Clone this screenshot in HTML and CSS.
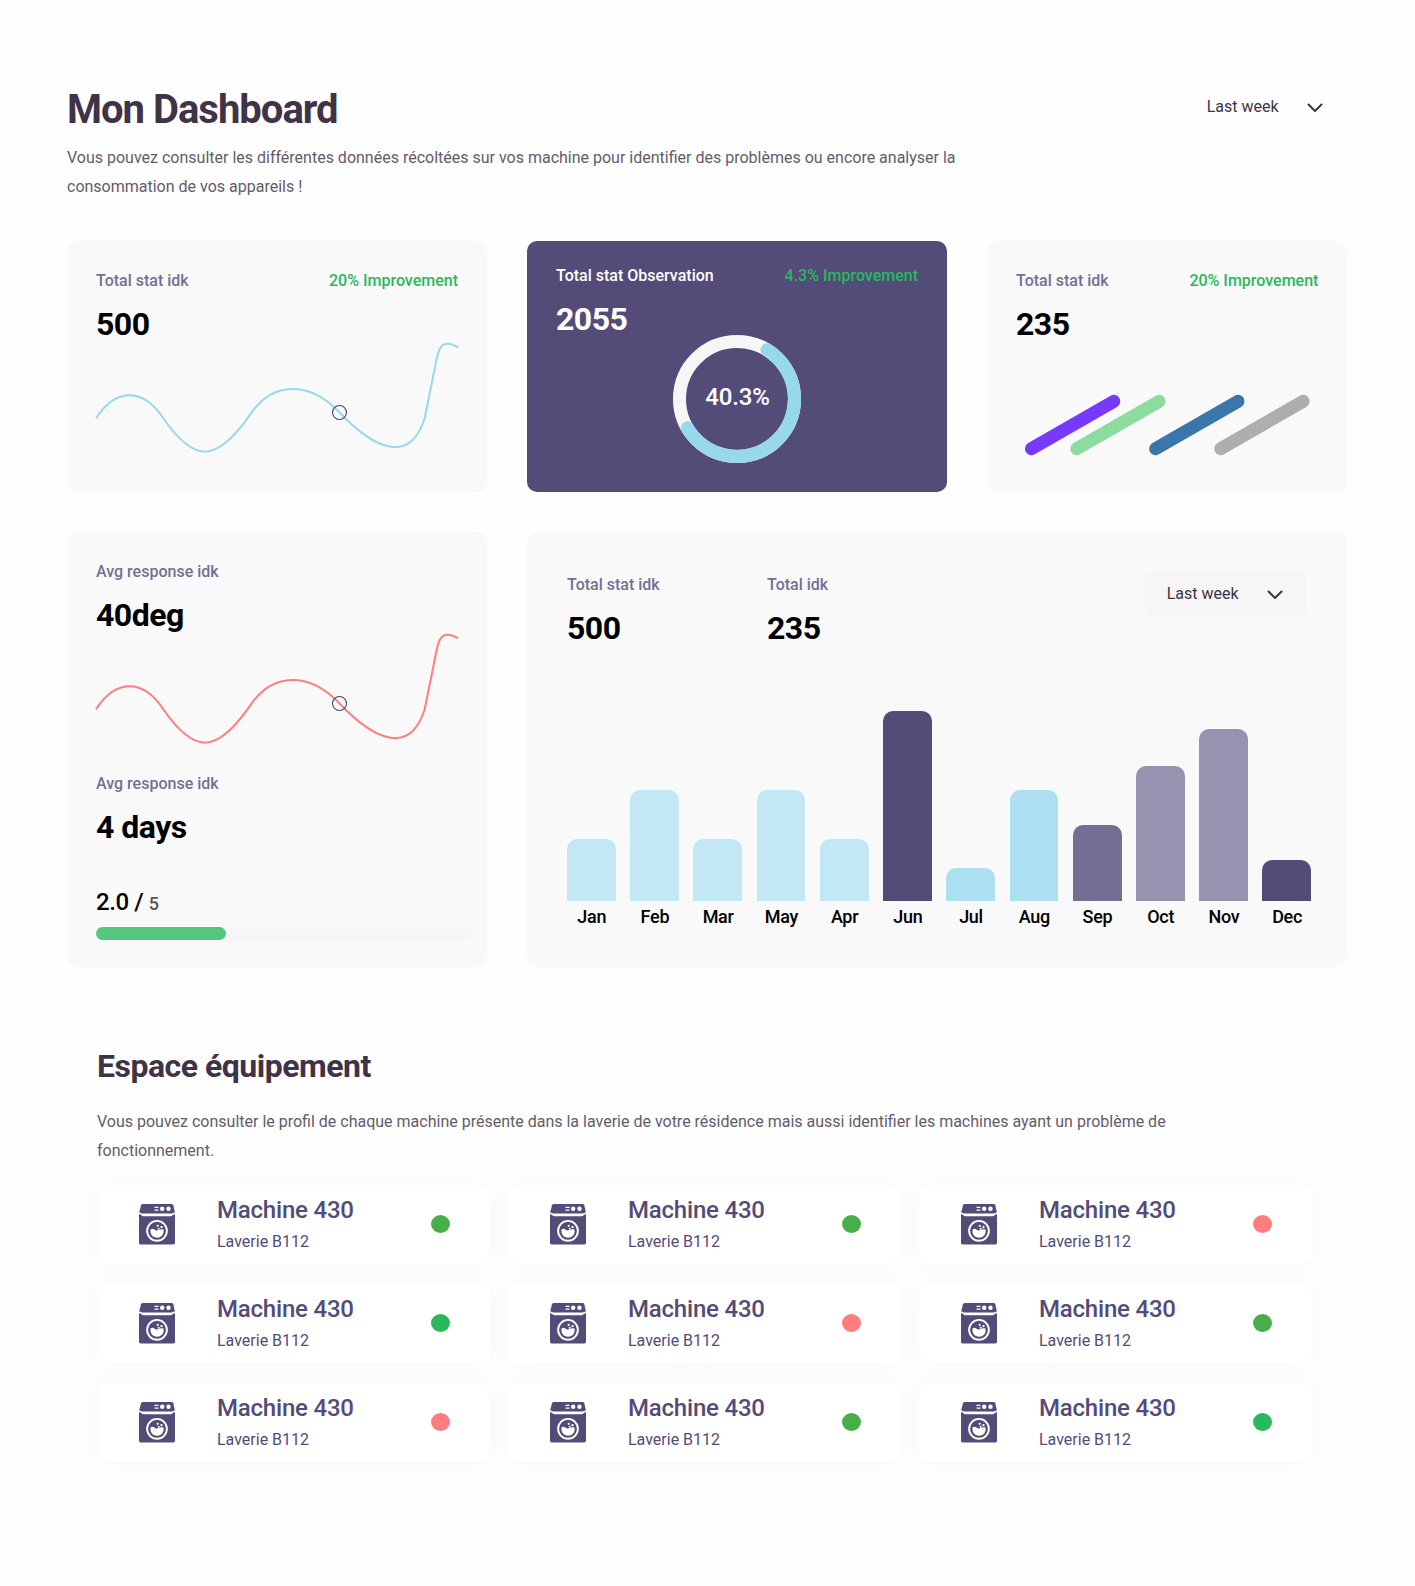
FILE: index.html
```html
<!DOCTYPE html>
<html lang="fr">
<head>
<meta charset="utf-8">
<title>Mon Dashboard</title>
<link rel="stylesheet" href="styles.css">
</head>
<body>
<svg class="defs" aria-hidden="true">
  <symbol id="wave" viewBox="0 0 362 112" overflow="visible">
    <path d="M0 76.3C20 45.700 47 45.700 67.300 76.300C98 121 120 121 152.700 74.700C176 38 213.500 39 243.300 70.300C278 107 314 123 328.700 76.300L341 15.300C343.500 4 348-3 362 5.300"/>
    <circle cx="243.500" cy="70.500" r="7" stroke="#483f70" stroke-width="1.100"/>
  </symbol>
  <symbol id="chevron" viewBox="0 0 16 10"><path d="M1.500 1.500L8 8L14.500 1.500"/></symbol>
  <symbol id="washer" viewBox="0 0 36 41">
    <path fill="#534b78" d="M4 0H32.600Q33.900 0 34.300 1.200L35.700 7.500Q35.700 9.600 34.600 9.600H1.500Q.4 9.600.4 7.500L2 1.200Q2.500 0 4 0Z"/>
    <path fill="#534b78" d="M0 10.200Q1.500 10.200 2.200 11Q3 12.200 4.500 12.200H31.500Q33 12.200 33.800 11Q34.500 10.200 36 10.200V38.800Q36 40.500 34.300 40.500H1.700Q0 40.500 0 38.800Z"/>
    <path fill="none" stroke="#fff" stroke-width="1" d="M.3 9.200Q2.200 9.200 2.800 10.100Q3.400 10.900 5 10.900H31Q32.600 10.900 33.200 10.100Q33.800 9.200 35.700 9.200"/>
    <path stroke="#fff" stroke-width="1.200" d="M15.500 3.300H19.500M15.500 6.200H19.500"/>
    <circle cx="23.200" cy="4.700" r="2.200" fill="#fff"/>
    <circle cx="29.500" cy="4.700" r="2.200" fill="#fff"/>
    <circle cx="18" cy="26.800" r="9.900" fill="none" stroke="#fff" stroke-width="1.900"/>
    <path fill="#fff" d="M11.500 25.500C13.500 24 15 25.200 16.500 26.200C19 27.400 21 24.300 24.600 25.700C25.200 31 22 33.700 18 33.700S10.900 30.500 11.500 25.500Z"/>
    <circle cx="18.700" cy="21.800" r="1.100" fill="#fff"/>
    <circle cx="22.500" cy="23.100" r="1.200" fill="#fff"/>
    <circle cx="19.700" cy="24.700" r="1" fill="#fff"/>
  </symbol>
</svg>

<main class="page">
  <header class="header">
    <div class="intro">
      <h1 class="title">Mon Dashboard</h1>
      <p class="text">Vous pouvez consulter les différentes données récoltées sur vos machine pour identifier des problèmes ou encore analyser la<br>consommation de vos appareils !</p>
    </div>
    <div class="select select-plain"><span>Last week</span><svg class="chevron"><use href="#chevron"/></svg></div>
  </header>

  <section class="cards">
    <article class="card stat">
      <div class="row"><span class="label">Total stat idk</span><span class="gain">20% Improvement</span></div>
      <div class="value">500</div>
      <svg class="wave wave-blue"><use href="#wave"/></svg>
    </article>

    <article class="card card-dark">
      <div class="row"><span class="label">Total stat Observation</span><span class="gain">4.3% Improvement</span></div>
      <div class="value">2055</div>
      <svg class="ring" viewBox="0 0 128 128">
        <circle cx="64" cy="64" r="57.500" fill="none" stroke="#f6f6f6" stroke-width="13"/>
        <path d="M94.200 15A57.500 57.500 0 1 1 14.400 93" fill="none" stroke="#98d8ec" stroke-width="13.300" stroke-linecap="round"/>
        <text class="ring-text" x="64.500" y="70" text-anchor="middle">40.3%</text>
      </svg>
    </article>

    <article class="card stat">
      <div class="row"><span class="label">Total stat idk</span><span class="gain">20% Improvement</span></div>
      <div class="value">235</div>
      <svg class="sticks" viewBox="0 0 285 61">
        <path stroke="#7839ff" d="M6.500 54.700L88.800 7.300"/>
        <path stroke="#8cdb9f" d="M51.800 54.700L134.100 7.300"/>
        <path stroke="#3976ac" d="M130.700 54.700L213 7.300"/>
        <path stroke="#aeaeae" d="M195.800 54.700L278.100 7.300"/>
      </svg>
    </article>

    <article class="card stat">
      <span class="label">Avg response idk</span>
      <div class="value">40deg</div>
      <svg class="wave wave-red"><use href="#wave"/></svg>
      <span class="label label-second">Avg response idk</span>
      <div class="value">4 days</div>
      <div class="score">2.0 / <small>5</small></div>
      <div class="progress"><div class="progress-fill"></div></div>
    </article>

    <article class="card chart-card">
      <div class="chart-head">
        <div class="metric"><span class="label">Total stat idk</span><div class="value">500</div></div>
        <div class="metric"><span class="label">Total idk</span><div class="value">235</div></div>
        <div class="select"><span>Last week</span><svg class="chevron"><use href="#chevron"/></svg></div>
      </div>
      <div class="chart">
        <div class="col"><div class="bar sky" style="height:62px"></div><span>Jan</span></div>
        <div class="col"><div class="bar sky" style="height:111px"></div><span>Feb</span></div>
        <div class="col"><div class="bar sky" style="height:62px"></div><span>Mar</span></div>
        <div class="col"><div class="bar sky" style="height:111px"></div><span>May</span></div>
        <div class="col"><div class="bar sky" style="height:62px"></div><span>Apr</span></div>
        <div class="col"><div class="bar indigo" style="height:190px"></div><span>Jun</span></div>
        <div class="col"><div class="bar azure" style="height:33px"></div><span>Jul</span></div>
        <div class="col"><div class="bar azure" style="height:111px"></div><span>Aug</span></div>
        <div class="col"><div class="bar mauve" style="height:76px"></div><span>Sep</span></div>
        <div class="col"><div class="bar lilac" style="height:135px"></div><span>Oct</span></div>
        <div class="col"><div class="bar lilac" style="height:172px"></div><span>Nov</span></div>
        <div class="col"><div class="bar indigo" style="height:41px"></div><span>Dec</span></div>
      </div>
    </article>
  </section>

  <section class="equipment">
    <h2 class="subtitle">Espace équipement</h2>
    <p class="text">Vous pouvez consulter le profil de chaque machine présente dans la laverie de votre résidence mais aussi identifier les machines ayant un problème de<br>fonctionnement.</p>
    <div class="machines">
      <div class="machine"><svg class="washer"><use href="#washer"/></svg><div class="info"><b>Machine 430</b><span>Laverie B112</span></div><i class="dot ok"></i></div>
      <div class="machine"><svg class="washer"><use href="#washer"/></svg><div class="info"><b>Machine 430</b><span>Laverie B112</span></div><i class="dot ok"></i></div>
      <div class="machine"><svg class="washer"><use href="#washer"/></svg><div class="info"><b>Machine 430</b><span>Laverie B112</span></div><i class="dot down"></i></div>
      <div class="machine"><svg class="washer"><use href="#washer"/></svg><div class="info"><b>Machine 430</b><span>Laverie B112</span></div><i class="dot ready"></i></div>
      <div class="machine"><svg class="washer"><use href="#washer"/></svg><div class="info"><b>Machine 430</b><span>Laverie B112</span></div><i class="dot down"></i></div>
      <div class="machine"><svg class="washer"><use href="#washer"/></svg><div class="info"><b>Machine 430</b><span>Laverie B112</span></div><i class="dot ok"></i></div>
      <div class="machine"><svg class="washer"><use href="#washer"/></svg><div class="info"><b>Machine 430</b><span>Laverie B112</span></div><i class="dot down"></i></div>
      <div class="machine"><svg class="washer"><use href="#washer"/></svg><div class="info"><b>Machine 430</b><span>Laverie B112</span></div><i class="dot ok"></i></div>
      <div class="machine"><svg class="washer"><use href="#washer"/></svg><div class="info"><b>Machine 430</b><span>Laverie B112</span></div><i class="dot ready"></i></div>
    </div>
  </section>
</main>
</body>
</html>
```
FILE: styles.css
```css
* { box-sizing: border-box; }
body { margin: 0; background: #fefefe; font-family: Roboto, sans-serif; font-size: 16px; color: #000; }
h1, h2, p { margin: 0; }
.defs { display: none; }

.page { width: 1415px; height: 1586px; padding: 85px 67.6px 0 67px; }
.header { display: flex; justify-content: space-between; align-items: flex-start; height: 156px; }
.title { padding-top: 1px; color: #3f3347; font-size: 40px; line-height: 48px; font-weight: 700; letter-spacing: -1px; }
.text { color: #655b6b; line-height: 29px; white-space: nowrap; }
.header .text { margin-top: 9px; }

.select { display: flex; align-items: center; justify-content: space-between; width: 161px; height: 44px; padding: 0 24px 2px 20.3px; border-radius: 5px; background: #f6f6f6; color: #3f3347; }
.select-plain { background: none; }
.chevron { width: 16px; height: 10px; margin-top: 3px; fill: none; stroke: #3f3347; stroke-width: 2; stroke-linecap: round; stroke-linejoin: round; }

.cards { display: grid; grid-template-columns: 420px 420px 360.4px; grid-template-rows: 251px 435px; gap: 40px; }
.card { border-radius: 10px; background: #f9f9f9; padding: 28px 29px 0; }
.card-dark { background: #534b78; color: #fff; padding-top: 23px; }
.card-dark .label { color: #fff; }
.row { display: flex; justify-content: space-between; }
.label { display: block; line-height: 24px; font-weight: 500; color: #756f94; }
.gain { line-height: 24px; font-weight: 500; color: #27b95d; }
.value { margin-top: 11px; font-size: 32px; line-height: 40px; font-weight: 700; letter-spacing: -0.5px; }

.wave { display: block; width: 362px; height: 112px; margin-top: -2px; overflow: visible; fill: none; stroke-width: 2; }
.wave-blue { stroke: #98d8ec; }
.wave-red { stroke: #ff7e7e; }

.ring { display: block; width: 128px; height: 128px; margin: -4px auto 0; }
.ring-text { fill: #fff; font-size: 24px; font-weight: 500; letter-spacing: -0.2px; }
.sticks { display: block; width: 285px; height: 61px; margin: 50px 0 0 9px; fill: none; stroke-width: 13; stroke-linecap: round; overflow: visible; }

.label-second { margin-top: 27px; }
.score { margin-top: 39px; font-size: 24px; line-height: 32px; font-weight: 500; letter-spacing: -0.4px; }
.score small { font-size: 18px; color: #555; }
.progress { width: 375px; height: 13px; margin-top: 7px; border-radius: 7px; background: #f6f6f6; }
.progress-fill { width: 130px; height: 13px; border-radius: 7px; background: #53c77e; }

.chart-card { grid-column: span 2; padding: 41px 36.2px 0 40px; }
.chart-head { display: flex; height: 129px; }
.metric { width: 200px; }
.chart-head .select { margin: -1px 3.8px 0 auto; }
.chart { display: flex; justify-content: space-between; align-items: flex-end; height: 227px; }
.col { display: flex; flex-direction: column; align-items: center; width: 48.8px; }
.col span { padding: 3px 0 0 0.6px; font-size: 18px; line-height: 25px; font-weight: 500; letter-spacing: -0.3px; }
.bar { width: 100%; border-radius: 10px 10px 0 0; }
.sky { background: #c3e8f5; }
.azure { background: #acdff0; }
.indigo { background: #534b78; }
.mauve { background: #756e92; }
.lilac { background: #9892b0; }

.equipment { padding: 79px 0 0 30px; }
.subtitle { color: #3f3347; font-size: 32px; line-height: 40px; font-weight: 700; letter-spacing: -0.5px; }
.equipment .text { margin-top: 21px; }
.machines { display: grid; grid-template-columns: repeat(3, 393px); grid-auto-rows: 79px; gap: 20px 18px; margin-top: 20px; }
.machine { display: flex; align-items: center; padding: 0 40px 0 42px; border-radius: 10px; background: #fff; color: #534b78; box-shadow: 0 0 25px rgba(0, 0, 0, 0.03); }
.washer { width: 36px; height: 41px; margin-right: 42px; }
.info { display: flex; flex-direction: column; padding-bottom: 2px; }
.info b { font-size: 24px; line-height: 32px; font-weight: 500; letter-spacing: -0.2px; }
.info span { line-height: 24px; margin-top: 4px; }
.dot { width: 19px; height: 18px; margin: 0 0 1px auto; border-radius: 50%; }
.ok { background: #46af49; }
.ready { background: #28b95d; }
.down { background: #ff7c7c; }
```
